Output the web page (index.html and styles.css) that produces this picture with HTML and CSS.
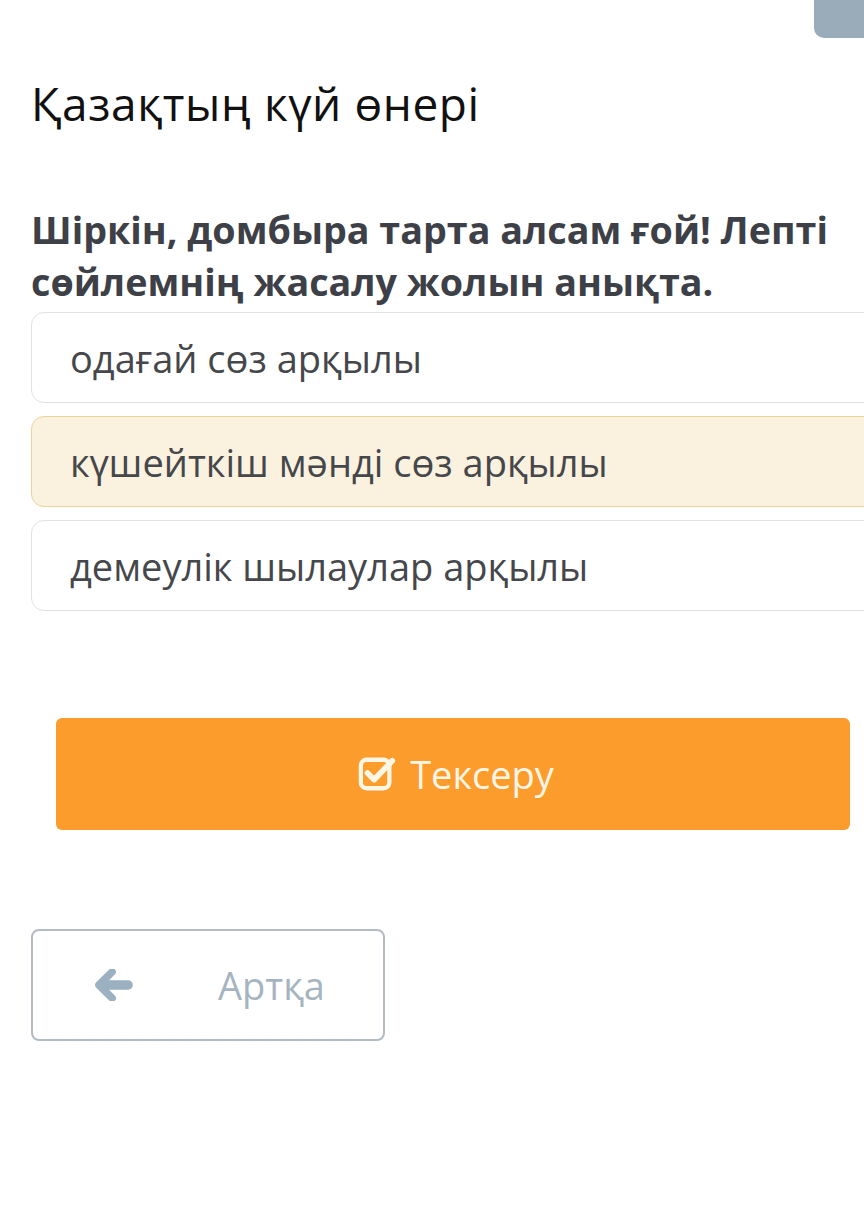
FILE: index.html
```html
<!DOCTYPE html>
<html lang="kk">
<head>
<meta charset="utf-8">
<link rel="stylesheet" href="styles.css">
</head>
<body>
<div class="page">
  <div class="corner-tab"></div>
  <h1 class="title">Қазақтың күй өнері</h1>
  <p class="question">Шіркін, домбыра тарта алсам ғой! Лепті сөйлемнің жасалу жолын анықта.</p>
  <div class="options">
    <div class="option">одағай сөз арқылы</div>
    <div class="option selected">күшейткіш мәнді сөз арқылы</div>
    <div class="option">демеулік шылаулар арқылы</div>
  </div>
  <div class="check-wrap">
    <button class="check-btn">
      <svg class="check-icon" viewBox="0 0 40 40" width="38" height="38">
        <rect x="3" y="5" width="30" height="30" rx="6" fill="none" stroke="currentColor" stroke-width="4.5"/>
        <path d="M10 19 L17 26 L36 6" fill="none" stroke="currentColor" stroke-width="6" stroke-linecap="round" stroke-linejoin="round"/>
      </svg>
      <span>Тексеру</span>
    </button>
  </div>
  <button class="back-btn">
    <svg class="back-icon" viewBox="0 0 40 34" width="38" height="32">
      <path d="M18 3 L4 17 L18 31" fill="none" stroke="currentColor" stroke-width="8" stroke-linecap="round" stroke-linejoin="round"/>
      <path d="M8 17 H35" fill="none" stroke="currentColor" stroke-width="10" stroke-linecap="round"/>
    </svg>
    <span>Артқа</span>
  </button>
</div>
</body>
</html>
```
FILE: styles.css
```css
html, body {
  margin: 0;
  padding: 0;
  background: #ffffff;
  overflow: hidden;
}
body {
  width: 864px;
  height: 1224px;
  font-family: "Open Sans", "Noto Sans", sans-serif;
}
.page {
  position: relative;
  padding: 0 0 0 31px;
}
.corner-tab {
  position: absolute;
  top: -10px;
  left: 814px;
  width: 70px;
  height: 48px;
  background: #9aabb9;
  border-radius: 10px;
}
.title {
  margin: 0;
  padding-top: 72px;
  font-weight: 400;
  font-size: 46px;
  line-height: 62px;
  color: #111111;
  letter-spacing: 0.6px;
  font-stretch: 88%;
}
.question {
  margin: 70px 0 0 0;
  font-weight: 700;
  font-size: 37.7px;
  line-height: 52px;
  color: #3d4047;
  font-stretch: 88%;
  width: 830px;
}
.options {
  display: flex;
  flex-direction: column;
  gap: 13px;
  margin-top: 4px;
  margin-right: -20px;
}
.option {
  height: 89px;
  border: 1px solid #e2e2e2;
  border-radius: 13px;
  display: flex;
  align-items: center;
  padding-left: 38px;
  font-size: 38px;
  color: #45474b;
  background: #ffffff;
}
.option.selected {
  background: #fbf1df;
  border-color: #ecd39b;
}
.check-wrap {
  margin-top: 107px;
  padding-left: 25px;
}
.check-btn {
  width: 794px;
  height: 112px;
  background: #fb9c2c;
  border: none;
  border-radius: 6px;
  color: #fff6e6;
  font-family: inherit;
  font-size: 38px;
  font-stretch: 90%;
  display: flex;
  align-items: center;
  justify-content: center;
  gap: 14px;
  padding: 0 0 0 6px;
}
.check-icon {
  display: block;
}
.back-btn {
  margin-top: 99px;
  width: 354px;
  height: 112px;
  background: #ffffff;
  border: 2px solid #b3bcc2;
  border-radius: 8px;
  color: #a6b4bf;
  font-family: inherit;
  font-size: 38px;
  font-stretch: 90%;
  display: flex;
  align-items: center;
  padding: 0 0 0 62px;
}
.back-icon {
  color: #9bb0c1;
  display: block;
}
.back-btn span {
  margin-left: 85px;
}
```
